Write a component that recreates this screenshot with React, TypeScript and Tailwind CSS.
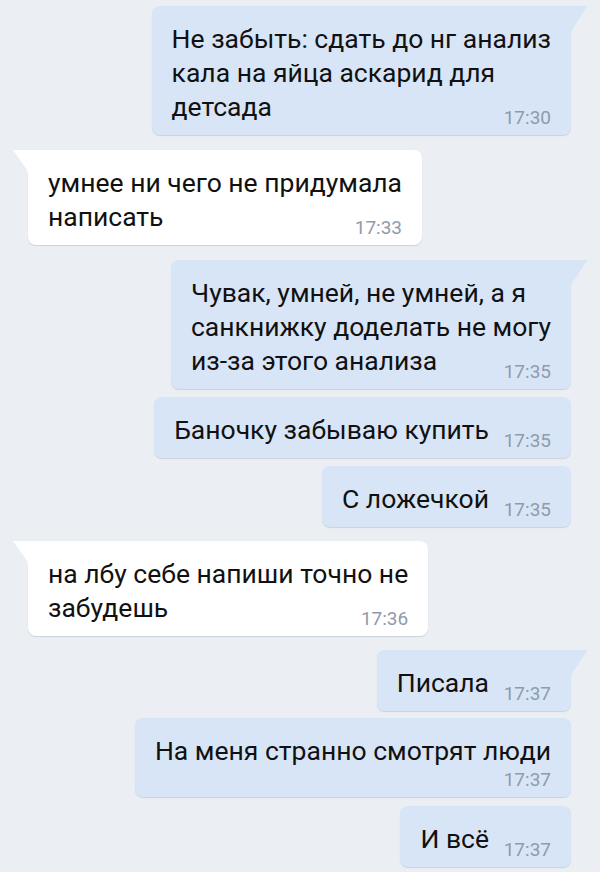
import React from "react";

type Msg = {
  out: boolean;
  lines: string[];
  time: string;
  tail?: boolean;
  below?: boolean;
  mt: string;
};

const msgs: Msg[] = [
  { out: true, tail: true, lines: ["Не забыть: сдать до нг анализ", "кала на яйца аскарид для", "детсада"], time: "17:30", mt: "mt-0" },
  { out: false, tail: true, lines: ["умнее ни чего не придумала", "написать"], time: "17:33", mt: "mt-[15px]" },
  { out: true, tail: true, lines: ["Чувак, умней, не умней, а я", "санкнижку доделать не могу", "из-за этого анализа"], time: "17:35", mt: "mt-[15px]" },
  { out: true, lines: ["Баночку забываю купить"], time: "17:35", mt: "mt-[8px]" },
  { out: true, lines: ["С ложечкой"], time: "17:35", mt: "mt-[8px]" },
  { out: false, tail: true, lines: ["на лбу себе напиши точно не", "забудешь"], time: "17:36", mt: "mt-[14px]" },
  { out: true, tail: true, lines: ["Писала"], time: "17:37", mt: "mt-[14px]" },
  { out: true, below: true, lines: ["На меня странно смотрят люди"], time: "17:37", mt: "mt-[7px]" },
  { out: true, lines: ["И всё"], time: "17:37", mt: "mt-[9px]" },
];

function Tail({ out }: { out: boolean }) {
  if (out) {
    return (
      <svg
        className="absolute top-0 right-[-17px]"
        width="18"
        height="28"
        viewBox="0 0 18 28"
      >
        <path d="M0 0 H17.5 L2.5 23 Q1 26 0 28 Z" fill="#d8e5f6" />
      </svg>
    );
  }
  return (
    <svg
      className="absolute top-0 left-[-15px]"
      width="16"
      height="28"
      viewBox="0 0 16 28"
    >
      <path d="M16 0 H0 L13.5 19 Q15 22 16 28 Z" fill="#ffffff" />
    </svg>
  );
}

function Bubble({ m }: { m: Msg }) {
  const bg = m.out ? "bg-[#d8e5f6]" : "bg-white";
  const corner = m.tail ? (m.out ? "rounded-tr-none" : "rounded-tl-none") : "";
  return (
    <div className={`flex ${m.out ? "justify-end" : "justify-start"} ${m.mt}`}>
      <div
        className={`relative ${bg} ${corner} rounded-[8px] shadow-[0_1px_1px_rgba(60,80,110,0.18)] pl-5 pr-5 pt-4 pb-[11px]`}
      >
        {m.tail && <Tail out={m.out} />}
        <div className="text-[26.5px] leading-[34px] text-[#111111] whitespace-nowrap">
          {m.lines.map((l, i) => (
            <div key={i}>
              {l}
              {i === m.lines.length - 1 && !m.below && (
                <span className="inline-block w-[62px]" />
              )}
            </div>
          ))}
          {m.below && <div className="h-[18px]" />}
        </div>
        <span className="absolute right-5 bottom-[8px] text-[19px] leading-[19px] text-[#8f9bac]">
          {m.time}
        </span>
      </div>
    </div>
  );
}

export default function App() {
  return (
    <div
      className="w-[600px] h-[872px] overflow-hidden bg-[#ebeff4] pt-[6px] pl-[28px] pr-[29px]"
      style={{ fontFamily: "Roboto, 'Noto Sans', sans-serif" }}
    >
      {msgs.map((m, i) => (
        <Bubble key={i} m={m} />
      ))}
    </div>
  );
}
